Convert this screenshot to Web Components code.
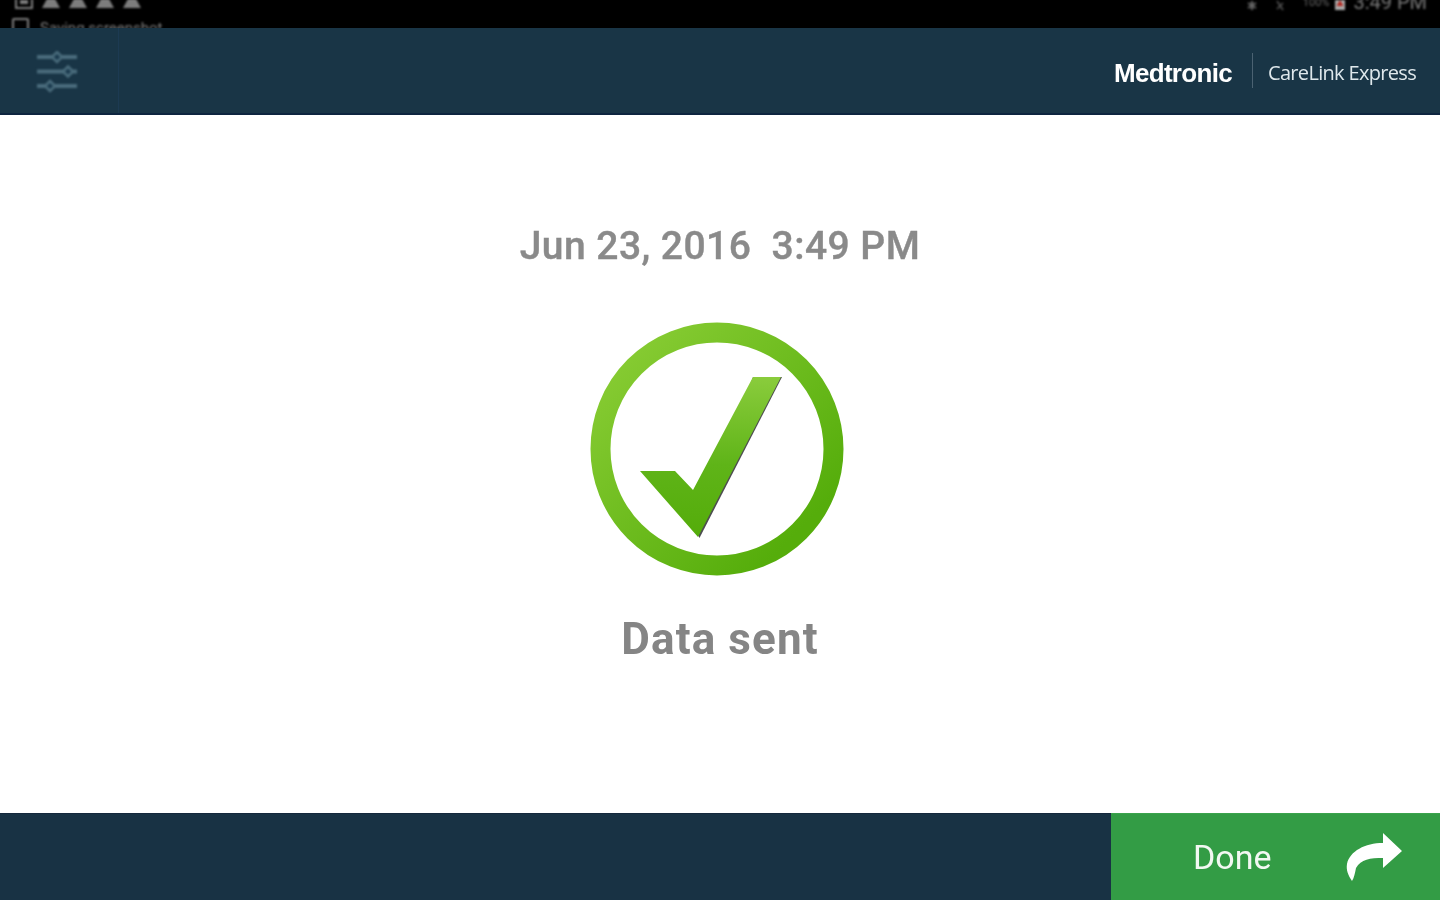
<!DOCTYPE html>
<html lang="en">
<head>
<meta charset="utf-8">
<title>CareLink Express</title>
<style>
html,body{margin:0;height:100%;overflow:hidden;background:#fff}
body{display:flex;flex-direction:column;width:1440px;height:900px;font-family:Roboto,"Liberation Sans",sans-serif}
</style>
</head>
<body>
<cl-status-bar></cl-status-bar>
<cl-header></cl-header>
<cl-result date="Jun 23, 2016&#160;&#160;3:49 PM" message="Data sent"></cl-result>
<cl-footer>Done</cl-footer>
<script>
function def(name, html){
  customElements.define(name, class extends HTMLElement{
    connectedCallback(){
      if(this.shadowRoot) return;
      const r=this.attachShadow({mode:'open'});
      r.innerHTML=typeof html==='function'?html(this):html;
    }
  });
}
def('cl-status-bar',`<style>
:host{display:flex;flex:none;height:28px;background:#000;overflow:hidden;justify-content:space-between;color:#7d7d7d;font:15px/14px Roboto,sans-serif}
.l{padding-left:12px;display:flex;flex-direction:column;filter:blur(1px)}
.icons{display:flex;gap:9px;height:10px;margin-top:-1px;padding-left:3px;align-items:flex-start}
.row{display:flex;align-items:center;gap:11px;margin-top:8px;height:16px}
.row span{position:relative;top:3px}
.r{display:flex;align-items:flex-start;padding-right:13px;margin-top:-7px;filter:blur(1px);font-size:20px;line-height:18px;color:#777}
.r span.s{font-size:11px;line-height:20px;margin:0 5px 0 18px;color:#666}
.r .t{margin-left:7px}
svg{display:block}
</style>
<div class="l">
 <div class="icons">
  <svg width="18" height="10" viewBox="0 0 18 10"><rect x="1" y="-4" width="16" height="13" fill="none" stroke="#7d7d7d" stroke-width="2"/><rect x="5" y="1" width="8" height="4" fill="#7d7d7d"/></svg>
  <svg width="18" height="10" viewBox="0 0 18 10"><path d="M6-2h6l6 11H0z" fill="#7d7d7d"/></svg>
  <svg width="18" height="10" viewBox="0 0 18 10"><path d="M6-2h6l6 11H0z" fill="#7d7d7d"/></svg>
  <svg width="18" height="10" viewBox="0 0 18 10"><path d="M6-2h6l6 11H0z" fill="#7d7d7d"/></svg>
  <svg width="18" height="10" viewBox="0 0 18 10"><path d="M6-2h6l6 11H0z" fill="#7d7d7d"/></svg>
 </div>
 <div class="row">
  <svg width="17" height="16" viewBox="0 0 17 16"><rect x="1" y="2" width="15" height="13" rx="1" fill="none" stroke="#7d7d7d" stroke-width="2"/></svg>
  <span>Saving screenshot</span>
 </div>
</div>
<div class="r">
 <svg width="12" height="18" viewBox="0 0 12 18" style="margin-right:17px"><path d="M6 8v9M2 10l8 5M10 10l-8 5" stroke="#666" stroke-width="2"/></svg>
 <svg width="10" height="18" viewBox="0 0 10 18"><path d="M2 8l6 9M8 10l-6 6" stroke="#555" stroke-width="1.500"/></svg>
 <span class="s">100%</span>
 <svg width="12" height="18" viewBox="0 0 12 18"><rect x="1" y="7" width="10" height="10" fill="#aaa"/><path d="M6 7l3.500 6h-7z" fill="#b3261e"/></svg>
 <span class="t">3:49 PM</span>
</div>`);

def('cl-header',`<style>
:host{display:flex;flex:none;box-sizing:border-box;height:87px;background:#193546;border-bottom:2px solid #0e2540;color:#fff;align-items:stretch}
.menu{width:119px;box-sizing:border-box;border-right:1px solid #1c3a52;display:flex;align-items:center;justify-content:center;padding:0 5px 0 0}
.menu svg{display:block;filter:blur(1px);margin-top:2px}
.brand{margin-left:auto;display:flex;align-items:center;padding:5px 24px 0 0}
.m{font:700 26px/30px "Liberation Sans",sans-serif;letter-spacing:-.7px;width:119px;white-space:nowrap;filter:blur(.6px)}
.d{width:1px;height:35px;background:#4b6272;margin:-5px 15px 0 19px}
.c{font:400 20px/30px "Open Sans",sans-serif;letter-spacing:-.68px;color:#dfe8ec;white-space:nowrap;filter:blur(.6px);width:148px}
</style>
<div class="menu" part="menu">
 <svg width="40" height="42" viewBox="0 0 40 42" fill="none" stroke="#4a6c7c" stroke-width="4">
  <path d="M0 6h40M0 20.500h40M0 35h40"/>
  <path d="M20 1l5 5-5 5-5-5z" fill="#1a3a4e" stroke-width="2.500"/>
  <path d="M31 15.500l5 5-5 5-5-5z" fill="#1a3a4e" stroke-width="2.500"/>
  <path d="M13 30l5 5-5 5-5-5z" fill="#1a3a4e" stroke-width="2.500"/>
 </svg>
</div>
<div class="brand"><span class="m">Medtronic</span><span class="d"></span><span class="c">CareLink Express</span></div>`);

def('cl-check-icon',`<style>
:host{display:block;width:254px;height:254px}
svg{display:block;filter:blur(.4px)}
</style>
<svg width="254" height="254" viewBox="590 322 254 254">
 <defs>
  <linearGradient id="ring" x1="0" y1="0" x2="1" y2="1"><stop offset=".1" stop-color="#86cb32"/><stop offset=".85" stop-color="#55ad0b"/></linearGradient>
  <linearGradient id="tick" x1="0" y1="0" x2="0" y2="1"><stop offset="0" stop-color="#8acc3c"/><stop offset=".55" stop-color="#5fb418"/><stop offset="1" stop-color="#54ac0a"/></linearGradient>
 </defs>
 <circle cx="717" cy="449" r="116.500" fill="none" stroke="url(#ring)" stroke-width="20"/>
 <path d="M753 377L782 377L699.500 538L695 530Z" fill="#4d4d50"/>
 <path d="M640 471H675L693 490L753 377H781L698 537Z" fill="url(#tick)"/>
</svg>`);

def('cl-result',t=>`<style>
:host{display:flex;flex:1;flex-direction:column;align-items:center;background:#fff;color:#8a8a8a;font-family:Roboto,sans-serif;font-weight:700;padding-top:107px;min-height:0}
.date{font-size:39px;line-height:48px;font-weight:500;white-space:nowrap;letter-spacing:.45px;filter:blur(.6px);-webkit-text-stroke:.4px #8a8a8a}
cl-check-icon{margin:52px 6px 0 0}
.msg{font-size:44px;line-height:52px;margin-top:37px;letter-spacing:1.1px;filter:blur(.6px);color:#858585}
</style>
<div class="date">${t.getAttribute('date')}</div>
<cl-check-icon></cl-check-icon>
<div class="msg">${t.getAttribute('message')}</div>`);

def('cl-footer',`<style>
:host{display:flex;flex:none;height:87px;background:#183244;justify-content:flex-end;box-sizing:border-box;border-top:1px solid #14283c}
.done{width:329px;background:#339c45;margin-top:-1px;color:#f2f8f2;font:400 34px/1 Roboto,sans-serif;display:flex;align-items:center;box-sizing:border-box;padding:0 38px 0 82px;justify-content:space-between;border-top:1px solid #3ba34d}
.t{filter:blur(.6px)}
svg{display:block;margin-top:-1px;filter:blur(.5px)}
</style>
<div class="done" part="button"><span class="t"><slot></slot></span>
 <svg width="56" height="50" viewBox="1346 832 56 50"><path d="M1383 833L1402 851L1383 868V858C1370 858 1361 859 1356 868C1355 873 1354 878 1352 881C1348 875 1346 870 1347 864C1350 851 1365 843 1383 843Z" fill="#fff"/></svg>
</div>`);
</script>
</body>
</html>
